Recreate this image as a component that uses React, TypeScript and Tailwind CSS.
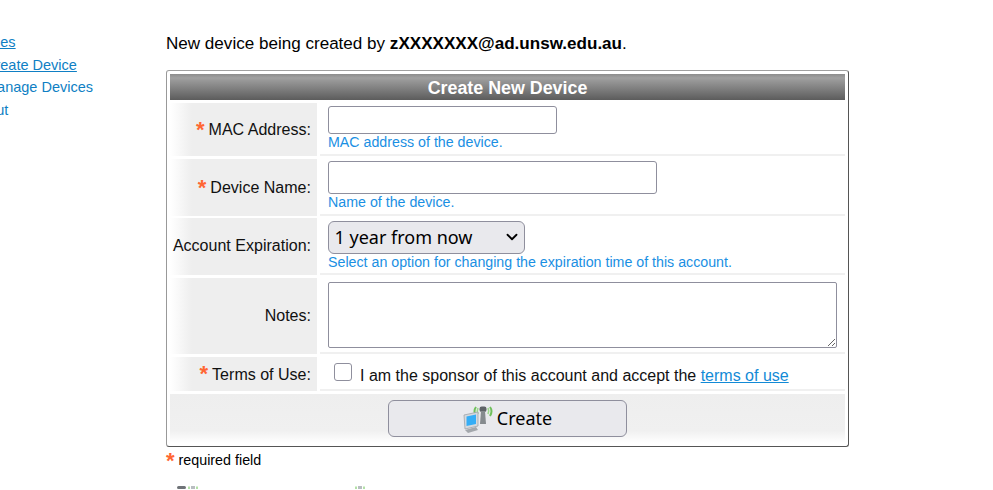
import { ChevronDown } from "lucide-react";

const labelCell =
  "flex items-center justify-end pr-[6px] bg-[linear-gradient(to_right,#ffffff,#eeeeee_15%)] text-[16.05px] text-[#111]";
const valueCell = "border-b-2 border-[#f0f0f0] pl-[8px]";
const hint = "text-[14.22px] leading-[16px] text-[#1a8fe3]";
const inputBox = "block h-[28px] rounded-[3px] border border-[#8f8f9d] bg-white";

function Star({ className = "" }: { className?: string }) {
  return <span className={`text-[#ff6633] text-[22px] leading-none font-bold ${className}`}>*</span>;
}

function DeviceIcon() {
  return (
    <svg width="30" height="28" viewBox="0 0 30 28" className="shrink-0">
      <path d="M13 2 Q10 6 13 11M27 2 Q30 6 27 11" fill="none" stroke="#6fbf5c" strokeWidth="2" />
      <path d="M15 3 Q13.5 6 15 9M25 3 Q26.5 6 25 9" fill="none" stroke="#9bd88a" strokeWidth="1.6" />
      <rect x="16.5" y="1.5" width="7" height="5.5" rx="2.2" fill="#5f6368" />
      <path d="M18 6h4l1 13h-6z" fill="#858a8e" />
      <path d="M1 10l14-3v14L2 24z" fill="#d5d9de" stroke="#9ea3a9" strokeWidth="0.8" />
      <path d="M3.5 11.5l9.5-2v9.5l-9.5 2z" fill="#35adf6" />
      <path d="M2 25l11-3 2 3-10 3z" fill="#a3a7ac" />
    </svg>
  );
}

function TinyIcon({ dark }: { dark?: boolean }) {
  return (
    <svg width="26" height="3" viewBox="0 0 26 3">
      {dark && <rect x="2" y="0" width="9" height="3" rx="1.5" fill="#6f7378" />}
      <path d="M14 0.5v3M22 0.5v3" stroke="#9bd88a" strokeWidth="1.5" />
      <path d="M16 0h4v3h-4z" fill="#b9bdc1" />
    </svg>
  );
}

export default function App() {
  return (
    <div className="h-[490px] w-[993px] overflow-hidden bg-white font-['Liberation_Sans',Arial,sans-serif] text-black flex">
      <nav className="w-[166px] shrink-0 pt-[31px] text-[14.5px] leading-[22.5px] text-[#0f7fc4]">
        <ul className="ml-[-15px]">
          <li className="underline">Files</li>
          <li className="underline">Create Device</li>
          <li>Manage Devices</li>
          <li>Out</li>
        </ul>
      </nav>

      <main className="w-[683px] pt-[34px]">
        <p className="text-[17.07px] leading-[20px] mb-[16px]">
          New device being created by <b>zXXXXXXX@ad.unsw.edu.au</b>.
        </p>

        <div className="h-[377px] rounded-[3px] border border-[#555] border-t-[#a0a0a0] border-l-[#999] p-[3px]">
          <div className="h-[26px] bg-[linear-gradient(to_bottom,#8c8c8c,#a0a0a0_15%,#5c5c5c)] text-center text-[17.85px] leading-[28px] font-bold text-white">
            Create New Device
          </div>

          <div className="grid grid-cols-[147px_525px] gap-x-[3px] mt-[3px]">
            <div className={`${labelCell} h-[53px] gap-[4px] mb-[3px]`}>
              <Star />
              MAC Address:
            </div>
            <div className={`${valueCell} h-[53px] pt-[3px] mb-[3px]`}>
              <input className={`${inputBox} w-[229px]`} />
              <div className={hint}>MAC address of the device.</div>
            </div>

            <div className={`${labelCell} h-[57px] gap-[4px] mb-[2px]`}>
              <Star />
              Device Name:
            </div>
            <div className={`${valueCell} h-[57px] pt-[2px] mb-[2px]`}>
              <input className={`${inputBox} w-[329px] h-[33px]`} />
              <div className={hint}>Name of the device.</div>
            </div>

            <div className={`${labelCell} h-[57px] mb-[3px] pb-[2px]`}>Account Expiration:</div>
            <div className={`${valueCell} h-[57px] pt-[3px] mb-[3px]`}>
              <div className="relative w-[197px]">
                <select className="block w-full h-[33px] appearance-none rounded-[6px] border border-[#8f8f9d] bg-[#e9e9ed] pl-[5.5px] pb-[1px] font-['Noto_Sans',sans-serif] text-[18px] text-black">
                  <option>1 year from now</option>
                </select>
                <ChevronDown className="absolute right-[4px] top-[7px] h-[18px] w-[18px] text-black pointer-events-none" strokeWidth={2.4} />
              </div>
              <div className={hint}>Select an option for changing the expiration time of this account.</div>
            </div>

            <div className={`${labelCell} h-[76px] mb-[3px] pb-[2px]`}>Notes:</div>
            <div className={`${valueCell} h-[76px] pt-[4px] mb-[3px]`}>
              <textarea className="block w-[509px] h-[66px] rounded-[2px] border border-[#8f8f9d] bg-white" />
            </div>

            <div className={`${labelCell} h-[34px] gap-[4px] mb-[3px]`}>
              <Star />
              Terms of Use:
            </div>
            <div className={`${valueCell} h-[34px] mb-[3px] pl-[14px] flex items-center gap-[8px] text-[16px] text-[#111]`}>
              <span className="h-[18px] w-[18px] rounded-[3px] border border-[#8f8f9d] bg-white mb-[2px]" />
              <span className="mt-[5px]">
                I am the sponsor of this account and accept the{" "}
                <span className="underline text-[#128ad6]">terms of use</span>
              </span>
            </div>
          </div>

          <div className="h-[49px] pt-[6px] bg-[linear-gradient(to_bottom,#eeeeee,#f0f0f0_75%,#ffffff)]">
            <button className="ml-[218px] flex h-[37px] w-[239px] items-center justify-center gap-[4px] rounded-[6px] border border-[#8f8f9d] bg-[#e9e9ed] font-['Noto_Sans',sans-serif] text-[18px] text-black">
              <DeviceIcon />
              Create
            </button>
          </div>
        </div>

        <div className="mt-[2px] flex items-start gap-[4px] text-[14.3px] leading-[18px]">
          <Star className="mt-[1px]" />
          <span className="mt-[2px]">required field</span>
        </div>

        <div className="mt-[14px] ml-[9px] flex gap-[141px]">
          <TinyIcon dark />
          <TinyIcon />
        </div>
      </main>
    </div>
  );
}
